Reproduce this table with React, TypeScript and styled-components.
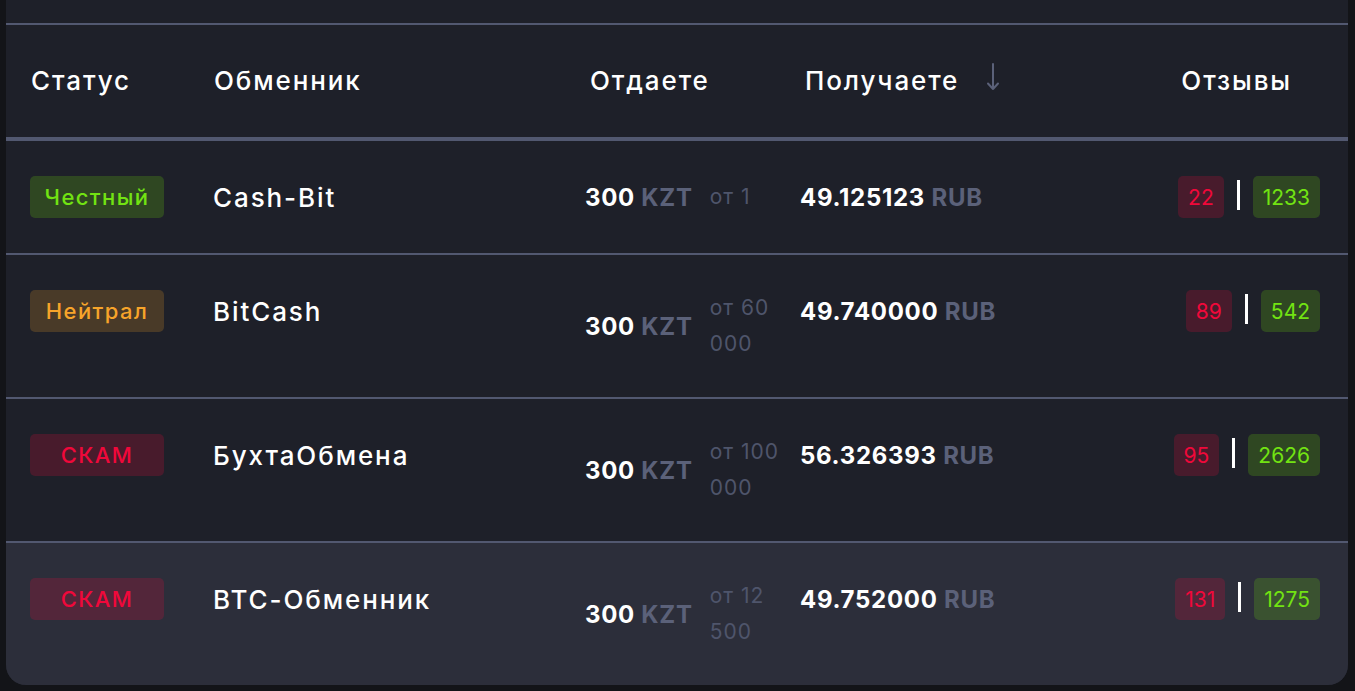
import { createGlobalStyle, styled } from 'styled-components';

type Status = 'honest' | 'neutral' | 'scam';

interface IExchangeRow {
  status: Status;
  name: string;
  give: string;
  giveCurrency: string;
  min: string;
  get: string;
  getCurrency: string;
  bad: number;
  good: number;
  active?: boolean;
}

const statusLabels: Record<Status, string> = {
  honest: 'Честный',
  neutral: 'Нейтрал',
  scam: 'СКАМ',
};

const rows: IExchangeRow[] = [
  { status: 'honest', name: 'Cash-Bit', give: '300', giveCurrency: 'KZT', min: 'от 1', get: '49.125123', getCurrency: 'RUB', bad: 22, good: 1233 },
  { status: 'neutral', name: 'BitCash', give: '300', giveCurrency: 'KZT', min: 'от 60 000', get: '49.740000', getCurrency: 'RUB', bad: 89, good: 542 },
  { status: 'scam', name: 'БухтаОбмена', give: '300', giveCurrency: 'KZT', min: 'от 100 000', get: '56.326393', getCurrency: 'RUB', bad: 95, good: 2626 },
  { status: 'scam', name: 'BTC-Обменник', give: '300', giveCurrency: 'KZT', min: 'от 12 500', get: '49.752000', getCurrency: 'RUB', bad: 131, good: 1275, active: true },
];

// полупрозрачные подложки, чтобы в подсвеченной строке они светлели
const tints = {
  green: { text: '#72e312', bg: 'rgba(115, 230, 10, 0.2)' },
  orange: { text: '#f7a42a', bg: 'rgba(247, 164, 42, 0.2)' },
  red: { text: '#f0083a', bg: 'rgba(240, 8, 58, 0.2)' },
};

const statusTint = (status: Status) =>
  status === 'honest' ? tints.green : status === 'neutral' ? tints.orange : tints.red;

function SortArrow() {
  return (
    <svg width="14" height="28" viewBox="0 0 14 28" fill="none">
      <path d="M7 1V26M2 20.5L7 26L12 20.5" stroke="#5b6179" strokeWidth="2" strokeLinecap="round" strokeLinejoin="round" />
    </svg>
  );
}

function App() {
  return (
    <>
      <GlobalStyle />
      <Panel>
        <HeaderRow>
          <HeadCell>Статус</HeadCell>
          <HeadCell>Обменник</HeadCell>
          <HeadCell $shift={5}>Отдаете</HeadCell>
          <HeadCell $shift={5}>
            Получаете
            <SortButton>
              <SortArrow />
            </SortButton>
          </HeadCell>
          <HeadCell $end>Отзывы</HeadCell>
        </HeaderRow>

        {rows.map((row) => (
          <Row key={row.name} $active={row.active}>
            <Cell>
              <StatusBadge $status={row.status}>{statusLabels[row.status]}</StatusBadge>
            </Cell>
            <Cell>
              <Name>{row.name}</Name>
            </Cell>
            <GiveCell>
              <Amount>
                {row.give} <Currency>{row.giveCurrency}</Currency>
              </Amount>
              <MinAmount>{row.min}</MinAmount>
            </GiveCell>
            <Cell>
              <Amount>
                {row.get} <Currency>{row.getCurrency}</Currency>
              </Amount>
            </Cell>
            <Reviews>
              <ReviewBadge $bad>{row.bad}</ReviewBadge>
              <ReviewDivider />
              <ReviewBadge>{row.good}</ReviewBadge>
            </Reviews>
          </Row>
        ))}
      </Panel>
    </>
  );
}

const GlobalStyle = createGlobalStyle`
  * {
    box-sizing: border-box;
  }
  body {
    margin: 0;
    background: #131418;
    font-family: 'Inter', 'Noto Sans', sans-serif;
    color: #ffffff;
  }
`;

const Panel = styled.div`
  margin: 0 7px 6px 6px;
  padding-top: 23px;
  background: #1e2029;
  border-radius: 0 0 20px 20px;
  overflow: hidden;
`;

const gridColumns = `
  display: grid;
  grid-template-columns: 183px 372px 215px 1fr auto;
  padding: 0 28px 0 24px;
`;

const HeaderRow = styled.div`
  ${gridColumns}
  height: 118px;
  align-items: center;
  border-top: 2px solid #525870;
  border-bottom: 4px solid #525870;
`;

const HeadCell = styled.div<{ $shift?: number; $end?: boolean }>`
  display: flex;
  align-items: center;
  margin-top: -2px;
  font-size: 26px;
  font-weight: 500;
  letter-spacing: 1.9px;
  color: #ffffff;
  padding-left: ${({ $shift }) => ($shift ? `${$shift}px` : '1px')};
  justify-content: ${({ $end }) => ($end ? 'flex-end' : 'flex-start')};
  margin-right: ${({ $end }) => ($end ? '28px' : '0')};
`;

const SortButton = styled.span`
  display: inline-flex;
  margin-left: 27px;
  margin-top: -7px;
`;

const Row = styled.div<{ $active?: boolean }>`
  ${gridColumns}
  padding-top: 35px;
  padding-bottom: 35px;
  align-items: start;
  background: ${({ $active }) => ($active ? '#2c2e3a' : 'transparent')};
  & + & {
    border-top: 2px solid #525870;
  }
`;

const Cell = styled.div`
  display: flex;
  align-items: center;
  height: 42px;
`;

const StatusBadge = styled.div<{ $status: Status }>`
  width: 134px;
  height: 42px;
  display: flex;
  align-items: center;
  justify-content: center;
  border-radius: 5px;
  font-size: 22px;
  font-weight: 500;
  letter-spacing: 1.4px;
  color: ${({ $status }) => statusTint($status).text};
  background: ${({ $status }) => statusTint($status).bg};
`;

const Name = styled.span`
  font-size: 26px;
  font-weight: 500;
  letter-spacing: 1.9px;
  color: #ffffff;
`;

const GiveCell = styled.div`
  display: flex;
  align-items: center;
  gap: 17px;
  min-height: 42px;
`;

const Amount = styled.span`
  font-size: 24px;
  font-weight: 700;
  letter-spacing: 0.7px;
  color: #ffffff;
  white-space: nowrap;
`;

const Currency = styled.span`
  color: #5b6179;
`;

const MinAmount = styled.span`
  max-width: 82px;
  font-size: 21px;
  letter-spacing: 1px;
  line-height: 36px;
  color: #4f556b;
`;

const Reviews = styled.div`
  display: flex;
  align-items: center;
  gap: 13px;
  height: 42px;
`;

const ReviewBadge = styled.div<{ $bad?: boolean }>`
  height: 42px;
  padding: 0 10px;
  display: flex;
  align-items: center;
  border-radius: 5px;
  font-size: 21px;
  color: ${({ $bad }) => ($bad ? tints.red.text : tints.green.text)};
  background: ${({ $bad }) => ($bad ? tints.red.bg : tints.green.bg)};
`;

const ReviewDivider = styled.div`
  width: 3px;
  height: 30px;
  margin-top: -4px;
  background: #ffffff;
`;

export default App;
